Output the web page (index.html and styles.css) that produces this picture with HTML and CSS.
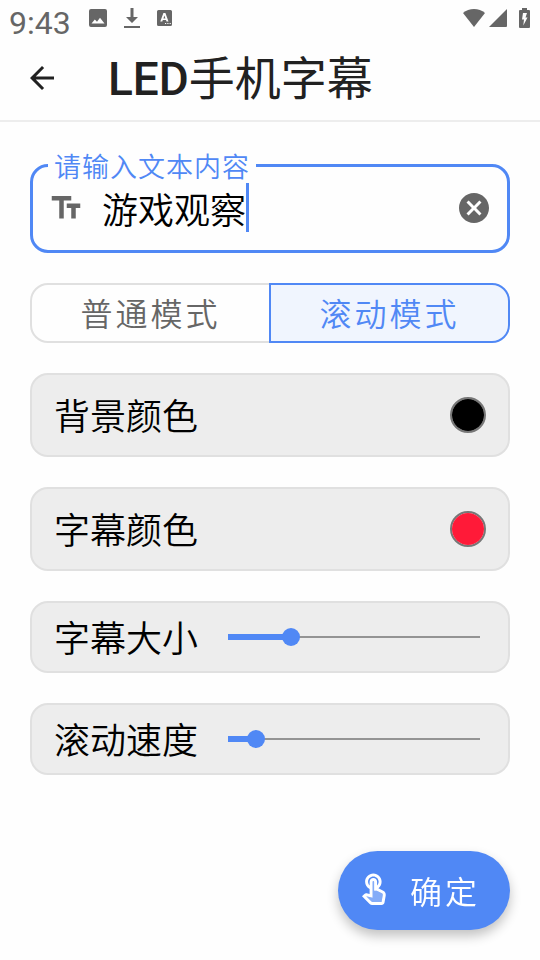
FILE: index.html
```html
<!DOCTYPE html>
<html lang="zh-CN">
<head>
    <meta charset="UTF-8">
    <meta name="viewport" content="width=device-width, initial-scale=1.0">
    <title>LED手机字幕</title>
    <link rel="stylesheet" href="styles.css">
</head>
<body>
    <div class="status-bar">
        <span class="clock">9:43</span>
        <div class="status-icons">
            <svg width="18" height="18" viewBox="0 0 18 18"><path fill-rule="evenodd" d="M2 0h14a2 2 0 0 1 2 2v14a2 2 0 0 1-2 2H2a2 2 0 0 1-2-2V2a2 2 0 0 1 2-2zM2.500 14.500h13L11 8.800l-3 4-2.200-2.300z"/></svg>
            <svg class="download" width="16" height="22" viewBox="0 0 16 22"><path d="M6.500 1h3v9H14l-6 6-6-6h4.500zM0 19h16v2H0z"/></svg>
            <svg width="16" height="18" viewBox="0 0 16 18"><path fill-rule="evenodd" d="M2 1h11.500a1.500 1.500 0 0 1 1.500 1.500v13a1.500 1.500 0 0 1-1.500 1.500H1.500A1.500 1.500 0 0 1 0 15.500v-13A1.500 1.500 0 0 1 1.500 1zM6.400 4L3.300 12.500h2l.5-1.600h3.200l.5 1.600h2L8.400 4zM7.400 6.400l1 3H6.400zM8 14v1h1.200v-1zM10.300 14v1h1.200v-1zM12.600 14v1h1.200v-1z"/></svg>
        </div>
        <div class="system-icons">
            <svg width="22" height="20" viewBox="0 0 22 20"><path d="M0 5C6-.3 16-.3 22 5L11 19z"/></svg>
            <svg width="18" height="20" viewBox="0 0 18 20"><path d="M18 1v17a1 1 0 0 1-1 1H0z"/></svg>
            <svg class="battery" width="11" height="20" viewBox="0 0 11 20"><path fill-rule="evenodd" d="M3 0h5v2h2a1 1 0 0 1 1 1v16a1 1 0 0 1-1 1H1a1 1 0 0 1-1-1V3a1 1 0 0 1 1-1h2zM4 5L3 11.500h2L4.300 17.500 8.500 9.500H6.500L8 5z"/></svg>
        </div>
    </div>

    <header class="app-bar">
        <button class="icon-btn" type="button" aria-label="返回">
            <svg viewBox="0 0 24 24"><path d="M20 11H7.830l5.590-5.590L12 4l-8 8 8 8 1.410-1.410L7.830 13H20z"/></svg>
        </button>
        <h1><span class="latin">LED</span>手机字幕</h1>
    </header>

    <main class="settings">
        <fieldset class="text-field">
            <legend><label for="content">请输入文本内容</label></legend>
            <div class="text-field-row">
                <svg class="field-icon" viewBox="0 0 24 24"><path d="M2.500 4v3h5v12h3V7h5V4zM21.500 9h-9v3h3v7h3v-7h3z"/></svg>
                <div class="input-wrap">
                    <input type="text" id="content" value="游戏观察">
                    <span class="caret"></span>
                </div>
                <button class="icon-btn clear-btn" type="button" aria-label="清除">
                    <svg viewBox="0 0 24 24"><path d="M12 2C6.470 2 2 6.470 2 12s4.470 10 10 10 10-4.470 10-10S17.530 2 12 2zm5 13.590L15.590 17 12 13.410 8.410 17 7 15.590 10.590 12 7 8.410 8.410 7 12 10.590 15.590 7 17 8.410 13.410 12z"/></svg>
                </button>
            </div>
        </fieldset>

        <div class="mode-group">
            <button class="mode-btn" type="button" aria-pressed="false">普通模式</button>
            <button class="mode-btn selected" type="button" aria-pressed="true">滚动模式</button>
        </div>

        <div class="card color-card">
            <label for="bgColor">背景颜色</label>
            <input type="color" id="bgColor" value="#000000">
        </div>

        <div class="card color-card">
            <label for="textColor">字幕颜色</label>
            <input type="color" id="textColor" value="#ff1a38">
        </div>

        <div class="card slider-card">
            <label for="textSize">字幕大小</label>
            <input type="range" id="textSize" min="0" max="100" value="23" style="--fill: 23%">
        </div>

        <div class="card slider-card">
            <label for="speed">滚动速度</label>
            <input type="range" id="speed" min="0" max="100" value="8" style="--fill: 8%">
        </div>
    </main>

    <button class="fab" type="button">
        <svg viewBox="0 0 24 24">
            <path opacity="0.3" d="M17.290 14.230L13.830 12.500h-1.760v-6a.5.5 0 0 0-1 0v10.610l-4.250-.89L10.500 19.900c.07.06.15.1.24.1h6.300l.8-4.710c.07-.43-.15-.86-.55-1.060z"/>
            <path d="M18.190 12.440l-3.240-1.620c1.290-1 2.120-2.560 2.120-4.320 0-3.030-2.470-5.500-5.500-5.500s-5.500 2.470-5.500 5.500c0 2.130 1.220 3.980 3 4.890v3.260c-2.150-.46-2.020-.44-2.260-.44-.53 0-1.030.21-1.410.59L4 16.220l5.090 5.090c.43.44 1.030.69 1.650.69h6.300c.98 0 1.810-.7 1.970-1.670l.8-4.710c.22-1.300-.43-2.580-1.620-3.180zm-.35 2.850l-.8 4.710h-6.300c-.09 0-.17-.04-.24-.1l-3.680-3.680 4.250.89V6.500c0-.28.22-.5.5-.5s.5.22.5.5v6h1.760l3.460 1.730c.4.2.62.63.55 1.060zM8.070 6.500c0-1.930 1.570-3.500 3.500-3.500s3.500 1.570 3.500 3.500c0 .95-.38 1.810-1 2.440V6.500c0-1.380-1.120-2.500-2.500-2.500s-2.500 1.120-2.500 2.500v2.440c-.62-.63-1-1.490-1-2.440z"/>
        </svg>
        确定
    </button>

    <script>
        // keep the coloured part of each slider in step with its thumb
        document.querySelectorAll('input[type="range"]').forEach(slider => {
            slider.addEventListener('input', () => {
                slider.style.setProperty('--fill', slider.value + '%');
            });
        });

        document.querySelector('.clear-btn').addEventListener('click', () => {
            document.getElementById('content').value = '';
        });
    </script>
</body>
</html>
```
FILE: styles.css
```css
:root {
    --primary: #5088f5;
    --primary-light: #f0f5fe;
    --card: #ededed;
    --outline: #e0e0e0;
    --muted: #666666;
    --title: #212121;
}

* {
    margin: 0;
    padding: 0;
    box-sizing: border-box;
}

body, button, input {
    font-family: 'Noto Sans CJK SC', Roboto, sans-serif;
    font-weight: 350;
}

body {
    background: #fefefe;
    color: #000;
    min-height: 100vh;
}

svg {
    display: block;
    fill: currentColor;
}

button {
    background: none;
    border: none;
    cursor: pointer;
}

.status-bar {
    display: flex;
    height: 36px;
    padding: 0 10px 0 9px;
    color: var(--muted);
}

.clock {
    font-family: Roboto, sans-serif;
    font-size: 32px;
    font-weight: 450;
    line-height: 46px;
}

.status-icons, .system-icons {
    display: flex;
    align-items: center;
    height: 36px;
}

.status-icons {
    gap: 17px;
    margin-left: 18px;
}

.system-icons {
    gap: 4px;
    margin-left: auto;
}

.battery {
    margin-left: 8px;
}

.app-bar {
    display: flex;
    align-items: center;
    gap: 48px;
    height: 86px;
    padding: 0 24px;
    border-bottom: 2px solid var(--card);
    color: var(--title);
}

.icon-btn {
    width: 36px;
    height: 36px;
    color: inherit;
}

h1 {
    padding-bottom: 2px;
    font-size: 46px;
    font-weight: 400;
    line-height: 60px;
}

.latin {
    font-family: Roboto, sans-serif;
    font-weight: 500;
}

.settings {
    display: flex;
    flex-direction: column;
    gap: 30px;
    padding: 30px;
}

.text-field {
    min-width: 0;
    padding: 0 15px 14px;
    border: 3px solid var(--primary);
    border-radius: 18px;
}

.text-field legend {
    padding: 0 6px;
    color: var(--primary);
    font-size: 27px;
    line-height: 27px;
    letter-spacing: 1px;
}

.text-field-row {
    display: flex;
    align-items: center;
    gap: 18px;
    height: 57px;
    color: var(--muted);
}

.field-icon {
    width: 36px;
    height: 36px;
}

.input-wrap {
    display: flex;
    align-items: center;
    flex: 1;
    min-width: 0;
}

.input-wrap input {
    field-sizing: content;
    max-width: 100%;
    border: none;
    outline: none;
    background: none;
    color: #000;
    caret-color: transparent;
    font-size: 36px;
}

.caret {
    width: 3px;
    height: 49px;
    background: var(--primary);
}

.mode-group {
    display: flex;
}

.mode-btn {
    flex: 1;
    height: 60px;
    padding-bottom: 2px;
    border: 2px solid var(--outline);
    border-radius: 18px 0 0 18px;
    color: var(--muted);
    font-size: 32px;
    letter-spacing: 3px;
}

.mode-btn.selected {
    margin-left: -2px;
    border-color: var(--primary);
    border-radius: 0 18px 18px 0;
    background: var(--primary-light);
    color: var(--primary);
}

.card {
    display: flex;
    align-items: center;
    border: 2px solid var(--outline);
    border-radius: 18px;
    background: var(--card);
    font-size: 36px;
    line-height: 46px;
}

.card label {
    padding-bottom: 2px;
}

.color-card {
    justify-content: space-between;
    padding: 16px 22px;
}

.slider-card {
    gap: 30px;
    padding: 10px 28px 10px 22px;
}

input[type="color"] {
    appearance: none;
    width: 36px;
    height: 36px;
    border: 2px solid #777;
    border-radius: 50%;
    overflow: hidden;
    background: none;
    cursor: pointer;
}

input[type="color"]::-webkit-color-swatch-wrapper {
    padding: 0;
}

input[type="color"]::-webkit-color-swatch {
    border: none;
    border-radius: 0;
}

input[type="range"] {
    appearance: none;
    flex: 1;
    min-width: 0;
    height: 18px;
    background:
        linear-gradient(var(--primary), var(--primary)) left center / var(--fill) 6px no-repeat,
        linear-gradient(#949494, #949494) left center / 100% 2px no-repeat;
    cursor: pointer;
}

input[type="range"]::-webkit-slider-thumb {
    appearance: none;
    width: 18px;
    height: 18px;
    border-radius: 50%;
    background: var(--primary);
}

.fab {
    position: fixed;
    right: 30px;
    bottom: 30px;
    display: flex;
    align-items: center;
    gap: 18px;
    height: 79px;
    padding: 0 30px 2px 18px;
    border-radius: 40px;
    background: var(--primary);
    box-shadow: 0 6px 12px rgba(0, 0, 0, 0.24);
    color: #fff;
    font-size: 32px;
    letter-spacing: 3px;
}

.fab svg {
    width: 36px;
    height: 36px;
}
```
